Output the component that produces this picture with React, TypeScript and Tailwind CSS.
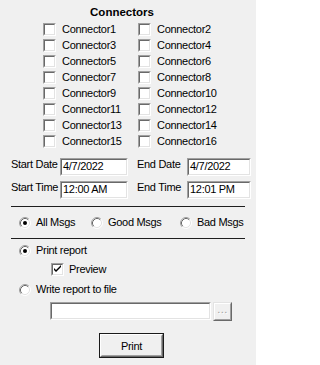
import React from "react";

function Sunken({ className = "", innerClassName = "", children }: { className?: string; innerClassName?: string; children?: React.ReactNode }) {
  return (
    <div className={"flex shrink-0 border border-t-[#a0a0a0] border-l-[#a0a0a0] border-b-white border-r-white " + className}>
      <div className={"flex-1 border border-t-[#696969] border-l-[#696969] border-b-[#e3e3e3] border-r-[#e3e3e3] bg-white " + innerClassName}>
        {children}
      </div>
    </div>
  );
}

function CheckBox({ checked = false }: { checked?: boolean }) {
  return (
    <Sunken className="mt-[1px] h-[13px] w-[13px]">
      {checked && (
        <svg width="9" height="9" viewBox="0 0 9 9" className="block">
          <path d="M1 3 L1 5 L3 7 L8 2 L8 0 L3 5 Z" fill="#000" />
        </svg>
      )}
    </Sunken>
  );
}

function Radio({ checked = false }: { checked?: boolean }) {
  return (
    <svg width="12" height="12" viewBox="0 0 12 12" className="mt-[2px] block shrink-0">
      <circle cx="6" cy="6" r="5" fill="#fff" />
      <path d="M2.11 9.89 A5.5 5.5 0 0 1 9.89 2.11" fill="none" stroke="#a0a0a0" strokeWidth="1" />
      <path d="M9.89 2.11 A5.5 5.5 0 0 1 2.11 9.89" fill="none" stroke="#ffffff" strokeWidth="1" />
      <path d="M2.82 9.18 A4.5 4.5 0 0 1 9.18 2.82" fill="none" stroke="#696969" strokeWidth="1" />
      <path d="M9.18 2.82 A4.5 4.5 0 0 1 2.82 9.18" fill="none" stroke="#e3e3e3" strokeWidth="1" />
      {checked && <circle cx="6" cy="6" r="2" fill="#000" />}
    </svg>
  );
}

const connectors = Array.from({ length: 16 }, (_, i) => `Connector${i + 1}`);

export default function App() {
  return (
    <div className="h-[365px] w-[256px] overflow-hidden bg-[#f0f0f0] font-['Liberation_Sans',Arial,sans-serif] text-[11px] tracking-[-0.3px] text-black">
      {/* Title */}
      <div className="h-[22px] pt-[4px] pr-[12px] text-center text-[11.5px] font-bold leading-[16px] tracking-[0px]">
        Connectors
      </div>

      {/* Connector checkboxes */}
      <div className="grid grid-cols-[95px_auto] pl-[43px]">
        {connectors.map((c) => (
          <div key={c} className="flex h-[16px] items-start">
            <CheckBox />
            <span className="ml-[6px] leading-[14px]">{c}</span>
          </div>
        ))}
      </div>

      {/* Dates */}
      <div className="mt-[8px] flex h-[18px] items-start pl-[11px]">
        <span className="w-[49px] leading-[12px]">Start Date</span>
        <Sunken className="h-[18px] w-[68px]" innerClassName="pl-[1px] leading-[12px]">4/7/2022</Sunken>
        <span className="ml-[9px] w-[50px] leading-[12px]">End Date</span>
        <Sunken className="h-[18px] w-[64px]" innerClassName="pl-[1px] leading-[12px]">4/7/2022</Sunken>
      </div>
      <div className="mt-[5px] flex h-[18px] items-start pl-[11px]">
        <span className="w-[49px] leading-[12px]">Start Time</span>
        <Sunken className="h-[18px] w-[68px]" innerClassName="pl-[1px] leading-[12px]">12:00 AM</Sunken>
        <span className="ml-[9px] w-[50px] leading-[12px]">End Time</span>
        <Sunken className="h-[18px] w-[64px]" innerClassName="pl-[1px] leading-[12px]">12:01 PM</Sunken>
      </div>

      <div className="mx-[11px] mt-[7px] h-[1px] bg-[#1e1e1e]" />

      {/* Message filter */}
      <div className="mt-[8px] flex h-[16px] items-start pl-[19px]">
        <div className="flex w-[72px] items-start">
          <Radio checked />
          <span className="ml-[5px] leading-[14px]">All Msgs</span>
        </div>
        <div className="flex w-[89px] items-start">
          <Radio />
          <span className="ml-[5px] leading-[14px]">Good Msgs</span>
        </div>
        <div className="flex items-start">
          <Radio />
          <span className="ml-[5px] leading-[14px]">Bad Msgs</span>
        </div>
      </div>

      <div className="mx-[11px] mt-[7px] h-[1px] bg-[#1e1e1e]" />

      {/* Print report */}
      <div className="mt-[4px] flex h-[16px] items-start pl-[19px]">
        <Radio checked />
        <span className="ml-[5px] leading-[14px]">Print report</span>
      </div>
      <div className="mt-[3px] flex h-[16px] items-start pl-[51px]">
        <CheckBox checked />
        <span className="ml-[5px] leading-[14px]">Preview</span>
      </div>
      <div className="mt-[4px] flex h-[16px] items-start pl-[19px]">
        <Radio />
        <span className="ml-[5px] leading-[15px]">Write report to file</span>
      </div>
      <div className="mt-[4px] flex items-start pl-[50px]">
        <Sunken className="h-[18px] w-[161px]" />
        <div className="ml-[2px] flex h-[19px] w-[19px] border border-t-[#e3e3e3] border-l-[#e3e3e3] border-b-[#696969] border-r-[#696969]">
          <div className="flex-1 border border-t-white border-l-white border-b-[#a0a0a0] border-r-[#a0a0a0] text-center leading-[11px] tracking-[0.5px] text-[#a0a0a0] [text-shadow:1px_1px_0_#fff]">
            ...
          </div>
        </div>
      </div>

      {/* Print button */}
      <div className="ml-[99px] mt-[12px] flex h-[25px] w-[65px] border border-[#1a1a1a]">
        <div className="flex flex-1 border border-t-white border-l-white border-b-[#696969] border-r-[#696969]">
          <div className="flex flex-1 items-center justify-center border border-t-[#f0f0f0] border-l-[#f0f0f0] border-b-[#a0a0a0] border-r-[#a0a0a0] bg-[#f0f0f0] leading-[12px]">
            Print
          </div>
        </div>
      </div>
    </div>
  );
}
